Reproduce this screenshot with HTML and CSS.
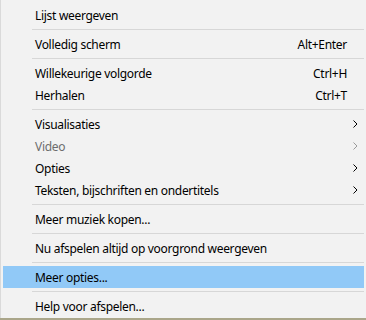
FILE: index.html
```html
<!DOCTYPE html>
<html lang="nl">
<head>
    <meta charset="UTF-8">
    <meta name="viewport" content="width=device-width, initial-scale=1.0">
    <title>Menu</title>
    <link rel="stylesheet" href="styles.css">
</head>
<body>
    <div class="menu">
        <div class="item"><span class="label">Lijst weergeven</span></div>
        <div class="sep"></div>
        <div class="item"><span class="label">Volledig scherm</span><span class="key">Alt+Enter</span></div>
        <div class="sep"></div>
        <div class="item"><span class="label">Willekeurige volgorde</span><span class="key">Ctrl+H</span></div>
        <div class="item"><span class="label">Herhalen</span><span class="key">Ctrl+T</span></div>
        <div class="sep"></div>
        <div class="item">
            <span class="label">Visualisaties</span>
            <svg class="arrow" width="5" height="8" viewBox="0 0 5 8"><polyline points="0.5,0.5 4,4 0.5,7.5" /></svg>
        </div>
        <div class="item disabled">
            <span class="label">Video</span>
            <svg class="arrow" width="5" height="8" viewBox="0 0 5 8"><polyline points="0.5,0.5 4,4 0.5,7.5" /></svg>
        </div>
        <div class="item">
            <span class="label">Opties</span>
            <svg class="arrow" width="5" height="8" viewBox="0 0 5 8"><polyline points="0.5,0.5 4,4 0.5,7.5" /></svg>
        </div>
        <div class="item">
            <span class="label">Teksten, bijschriften en ondertitels</span>
            <svg class="arrow" width="5" height="8" viewBox="0 0 5 8"><polyline points="0.5,0.5 4,4 0.5,7.5" /></svg>
        </div>
        <div class="sep"></div>
        <div class="item"><span class="label">Meer muziek kopen...</span></div>
        <div class="sep"></div>
        <div class="item"><span class="label">Nu afspelen altijd op voorgrond weergeven</span></div>
        <div class="sep"></div>
        <div class="item active"><span class="label">Meer opties...</span></div>
        <div class="sep"></div>
        <div class="item"><span class="label">Help voor afspelen...</span></div>
    </div>
</body>
</html>
```

FILE: styles.css
```css
body {
    margin: 0;
    background: #aaa68a;
    font-family: 'Noto Sans', 'Liberation Sans', sans-serif;
    font-size: 12px;
    letter-spacing: -0.3px;
    color: #000;
}

.menu {
    box-sizing: border-box;
    width: 366px;
    height: 318px;
    padding: 4px 2px 0 2px;
    background: #f2f2f2;
    border-left: 1px solid #dadada;
    overflow: hidden;
}

.item {
    display: grid;
    grid-template-columns: 1fr auto 17px;
    align-items: center;
    height: 22px;
    padding-left: 32px;
    white-space: nowrap;
}

.label {
    grid-column: 1;
}

.key {
    grid-column: 2;
}

.arrow {
    grid-column: 3;
    margin-left: 6px;
    fill: none;
    stroke: #000;
    stroke-width: 1;
}

.disabled {
    color: #6d6d6d;
}

.disabled .arrow {
    stroke: #9a9a9a;
}

.active {
    background: #91c9f7;
}

.sep {
    height: 1px;
    margin: 3px 0 3px 29px;
    background: #d7d7d7;
}
```
